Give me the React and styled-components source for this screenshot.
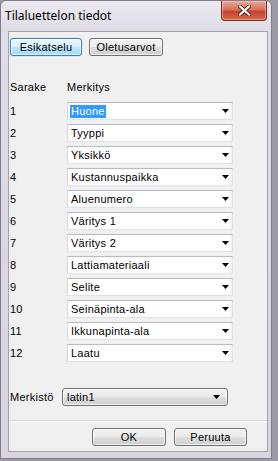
import React from 'react';
import styled, { createGlobalStyle, css } from 'styled-components';

const GlobalStyle = createGlobalStyle`
  html, body {
    margin: 0;
    padding: 0;
    background: #9c9ba3;
  }
  body {
    font-family: "Liberation Sans", Arial, sans-serif;
    font-size: 11px;
    letter-spacing: 0.25px;
    color: #000;
  }
`;

const columns = [
  'Huone',
  'Tyyppi',
  'Yksikkö',
  'Kustannuspaikka',
  'Aluenumero',
  'Väritys 1',
  'Väritys 2',
  'Lattiamateriaali',
  'Selite',
  'Seinäpinta-ala',
  'Ikkunapinta-ala',
  'Laatu'
];

const Window = styled.div`
  box-sizing: border-box;
  width: 272px;
  height: 459px;
  border: 1px solid #7f7b8a;
  border-radius: 6px 6px 0 0;
  background: linear-gradient(to bottom, #ebeaf1 0px, #dedce6 30px, #d8d4e0 100%);
  padding: 0 3px 6px 7px;
  display: flex;
  flex-direction: column;
`;

const TitleBar = styled.div`
  height: 30px;
  display: flex;
  align-items: flex-start;
  justify-content: space-between;
  margin-left: -7px;
  margin-right: -3px;
`;

const Title = styled.div`
  font-family: "Noto Sans", "Open Sans", sans-serif;
  font-size: 12px;
  letter-spacing: 0;
  line-height: 16px;
  padding: 7px 0 0 4px;
  color: #000;
`;

const CloseButton = styled.div`
  width: 46px;
  height: 20px;
  margin-right: 4px;
  box-sizing: border-box;
  border: 1px solid #7a2a1d;
  border-top: none;
  border-radius: 0 0 4px 4px;
  background: linear-gradient(to bottom, #e9a99b 0%, #d9715c 45%, #c5432c 55%, #d66a4d 100%);
  box-shadow: inset 0 0 0 1px rgba(255, 220, 210, 0.45);
  display: flex;
  align-items: center;
  justify-content: center;
`;

const Client = styled.div`
  flex: 1;
  box-sizing: border-box;
  border: 1px solid #a4a1ad;
  background: #f0f0f0;
  display: flex;
  flex-direction: column;
`;

const TopBar = styled.div`
  display: flex;
  gap: 7px;
  padding: 6px 0 0 1px;
`;

const buttonBase = css`
  box-sizing: border-box;
  height: 18px;
  border: 1px solid #707070;
  border-radius: 3px;
  font-family: "Liberation Sans", Arial, sans-serif;
  font-size: 11px;
  color: #000;
  display: flex;
  align-items: center;
  justify-content: center;
  background: linear-gradient(to bottom, #f3f3f3 0%, #ebebeb 48%, #dddddd 52%, #cfcfcf 100%);
  box-shadow: inset 0 0 0 1px rgba(255, 255, 255, 0.7);
`;

const Button = styled.div`
  ${buttonBase}
  width: ${p => p.$width || 72}px;
  ${p => p.$active && css`
    border-color: #3c7fb1;
    background: linear-gradient(to bottom, #eaf6fd 0%, #d9f0fc 48%, #bee6fd 52%, #a7d9f5 100%);
    box-shadow: inset 0 0 0 1px rgba(255, 255, 255, 0.6), 0 0 1px #5ab0e0;
  `}
`;

const HeaderRow = styled.div`
  display: grid;
  grid-template-columns: 57px 166px;
  margin: 25px 0 0 1px;
  line-height: 13px;
`;

const Grid = styled.div`
  display: grid;
  grid-template-columns: 57px 166px;
  grid-auto-rows: 18px;
  row-gap: 4px;
  margin: 8px 0 0 1px;
`;

const RowLabel = styled.div`
  display: flex;
  align-items: center;
  line-height: 13px;
`;

const Combo = styled.div`
  box-sizing: border-box;
  height: 18px;
  border: 1px solid #e0e2e8;
  border-top-color: #b9bbc2;
  border-left-color: #d8dae0;
  background: #fff;
  display: flex;
  align-items: center;
  justify-content: space-between;
  padding: 0 3px 0 2px;
  box-shadow: inset -2px 0 0 #f4f4f4;
`;

const ComboText = styled.span`
  line-height: 13px;
  padding: 0 1px;
  ${p => p.$selected && css`
    background: #3399ff;
    color: #fff;
  `}
`;

const Arrow = () => (
  <svg width="7" height="4" viewBox="0 0 7 4">
    <path d="M0 0 H7 L3.5 4 Z" fill="#000" />
  </svg>
);

const CharsetRow = styled.div`
  display: flex;
  align-items: center;
  margin: 26px 0 0 1px;
`;

const CharsetLabel = styled.div`
  width: 52px;
  line-height: 13px;
`;

const DropList = styled.div`
  ${buttonBase}
  width: 166px;
  justify-content: space-between;
  padding: 0 7px 0 4px;
`;

const Separator = styled.div`
  margin-top: 14px;
  height: 0;
  border-top: 1px solid #d8d8d8;
  border-bottom: 1px solid #ffffff;
`;

const Footer = styled.div`
  display: flex;
  justify-content: flex-end;
  gap: 8px;
  padding: 6px 20px 0 0;
`;

export default function App() {
  return (
    <>
      <GlobalStyle />
      <Window>
        <TitleBar>
          <Title>Tilaluettelon tiedot</Title>
          <CloseButton>
            <svg width="13" height="11" viewBox="0 0 13 11">
              <path d="M2 1.5 L11 9.5 M11 1.5 L2 9.5" stroke="#5a1a10" strokeWidth="4" strokeLinecap="square" />
              <path d="M2 1.5 L11 9.5 M11 1.5 L2 9.5" stroke="#fff" strokeWidth="2.2" strokeLinecap="square" />
            </svg>
          </CloseButton>
        </TitleBar>
        <Client>
          <TopBar>
            <Button $active>Esikatselu</Button>
            <Button $width={74}>Oletusarvot</Button>
          </TopBar>
          <HeaderRow>
            <span>Sarake</span>
            <span>Merkitys</span>
          </HeaderRow>
          <Grid>
            {columns.map((name, i) => (
              <React.Fragment key={name}>
                <RowLabel>{i + 1}</RowLabel>
                <Combo>
                  <ComboText $selected={i === 0}>{name}</ComboText>
                  <Arrow />
                </Combo>
              </React.Fragment>
            ))}
          </Grid>
          <CharsetRow>
            <CharsetLabel>Merkistö</CharsetLabel>
            <DropList>
              <span>latin1</span>
              <Arrow />
            </DropList>
          </CharsetRow>
          <Separator />
          <Footer>
            <Button $width={74}>OK</Button>
            <Button $width={73}>Peruuta</Button>
          </Footer>
        </Client>
      </Window>
    </>
  );
}
